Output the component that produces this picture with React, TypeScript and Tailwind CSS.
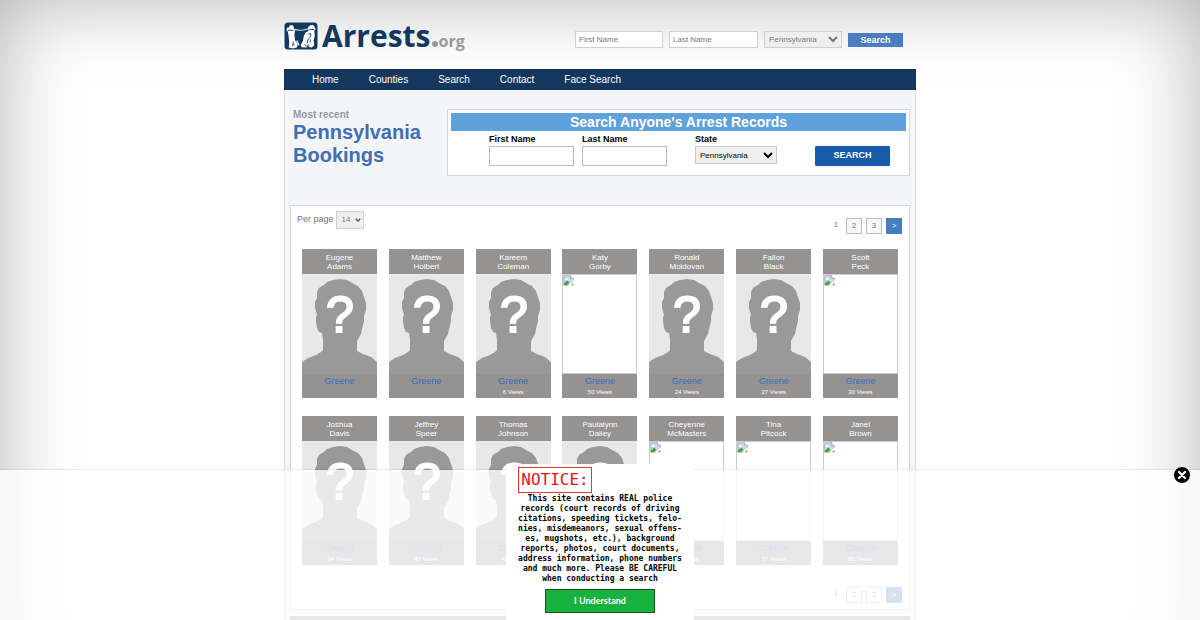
import React from 'react';

type Booking = {
  first: string;
  last: string;
  views?: number;
  photo: 'unknown' | 'missing';
};

const firstRow: Booking[] = [
  { first: 'Eugene', last: 'Adams', photo: 'unknown' },
  { first: 'Matthew', last: 'Holbert', photo: 'unknown' },
  { first: 'Kareem', last: 'Coleman', views: 6, photo: 'unknown' },
  { first: 'Katy', last: 'Gorby', views: 50, photo: 'missing' },
  { first: 'Ronald', last: 'Moldovan', views: 24, photo: 'unknown' },
  { first: 'Fallon', last: 'Black', views: 27, photo: 'unknown' },
  { first: 'Scott', last: 'Peck', views: 30, photo: 'missing' },
];

const secondRow: Booking[] = [
  { first: 'Joshua', last: 'Davis', views: 34, photo: 'unknown' },
  { first: 'Jeffrey', last: 'Speer', views: 42, photo: 'unknown' },
  { first: 'Thomas', last: 'Johnson', views: 45, photo: 'unknown' },
  { first: 'Paulalynn', last: 'Dailey', photo: 'unknown' },
  { first: 'Cheyenne', last: 'McMasters', views: 60, photo: 'missing' },
  { first: 'Tina', last: 'Pitcock', views: 57, photo: 'missing' },
  { first: 'Janel', last: 'Brown', views: 65, photo: 'missing' },
];

const navLinks = ['Home', 'Counties', 'Search', 'Contact', 'Face Search'];

const noticeLines = [
  'This site contains REAL police',
  'records (court records of driving',
  'citations, speeding tickets, felo-',
  'nies, misdemeanors, sexual offens-',
  'es, mugshots, etc.), background',
  'reports, photos, court documents,',
  'address information, phone numbers',
  'and much more. Please BE CAREFUL',
  'when conducting a search',
];

// Two cuffed hands on a navy badge
const LogoMark = () => (
  <svg viewBox="0 0 34 28" className="w-[34px] h-7" aria-hidden="true">
    <rect x="0.5" y="0.5" width="33" height="27" rx="3.5" fill="#14375f" />
    <path d="M2.4 8.200 3 5.800 5 5.400 5.600 3.400 8 3l1.600 1.600.4 2.600L11 9l-.6 4 .8 5.400 2.600 4.200-1 2.800-3.800 1-4.200-.8.400-5.400-.6-6.200-.8-4.400z" fill="#fff" />
    <path d="m24 5.400 2.200-2.200 3-.2 1.600 2.400 1 1.800-1.600 1.400.6 5.200-1.200 4.400.6 5.200-2.400 2-3-.4-.6-3.600-1.600 4-5-.2-.8-2.200 2.200-4.200.8-4.800 1.800-3.600 2.800-1.400z" fill="#fff" />
    <path d="m10 7.400 5 .8 4.600-.2 5-1.200" fill="none" stroke="#dfe5ee" strokeWidth="1.1" />
    <path d="m12 19 2.200 4.600 1.400-.4-2-5z" fill="#dfe5ee" />
    <path d="m9.600 19.600-1.200 4 2-1M24.200 11.800l2.400-.2.200 3-2.600 2.400-1.200 4.400M20.400 22.800l2.200 1M4 8.400l5.400-.2M25.400 7.600l5-.2M26.600 17.400l-.6 3" fill="none" stroke="#14375f" strokeWidth="0.9" />
  </svg>
);

const UnknownPhoto = () => (
  <svg viewBox="0 0 75 100" preserveAspectRatio="none" className="block w-full h-[100px] bg-[#e8e8e8]" role="img" aria-label="No photo">
    <path
      d="M0 100V88L6 84L14 81L19 78L21 76V65L20 59L17 58L15 54L14 47V43L15 41L13 34V28L15 24V18L17 14L20 12L22 11L25 8L31 6L38 5L45 6L50 9L56 12L60 17L62 23L64 29V36L62 42L62 47L60 55L59 60L55 67V77L61 80L69 83L75 88V100Z"
      fill="#999999"
    />
    <text
      x="38"
      y="58"
      textAnchor="middle"
      fontFamily="Liberation Sans, Arial, sans-serif"
      fontSize="50"
      fill="#fff"
      stroke="#fff"
      strokeWidth="2"
    >
      ?
    </text>
  </svg>
);

const MissingPhoto = () => (
  <div className="h-[100px] bg-white border border-[#cccccc]">
    <svg viewBox="0 0 16 16" className="block w-[11px] h-[11px]" role="img" aria-label="Missing photo">
      <path d="M1 1h10l4 4v5l-5 5H1z" fill="#c6d8f2" stroke="#9a9a9a" />
      <path d="M11 1v4h4" fill="#fff" stroke="#9a9a9a" />
      <path d="M2.5 6c.4-2 3-2 3.500-.8C7.500 5 8 7 6.500 7h-3z" fill="#fff" />
      <path d="M1.500 14.500V12L6 8l3.500 3L6 14.500z" fill="#4fa13a" />
      <path d="m7 15.500 9-8V11l-4.500 4.500z" fill="#fff" />
      <path d="M11.500 15H15v-3.500z" fill="#4fa13a" />
    </svg>
  </div>
);

const BookingCard = ({ booking }: { booking: Booking }) => (
  <article className="w-[75px] bg-[#959292] text-center">
    <h2 className="h-[25px] pt-1 text-[8px] leading-[9px] text-white">
      {booking.first}
      <br />
      {booking.last}
    </h2>
    {booking.photo === 'unknown' ? <UnknownPhoto /> : <MissingPhoto />}
    <div className="h-6 pt-0.5">
      <a href="#greene" className="block text-[9px] leading-[10px] text-[#3a6ebd]">Greene</a>
      {booking.views !== undefined && (
        <p className="pt-0.5 text-[6px] leading-[8px] text-white">{booking.views} Views</p>
      )}
    </div>
  </article>
);

const Pagination = () => (
  <nav aria-label="Pages" className="flex gap-1 text-[8px] leading-[14px] text-center text-[#777777]">
    <span className="w-3 h-4">1</span>
    <a href="#page-2" className="w-4 h-4 border border-[#b9bcc6] bg-[#f7f8fa]">2</a>
    <a href="#page-3" className="w-4 h-4 border border-[#b9bcc6] bg-[#f7f8fa]">3</a>
    <a href="#next" className="w-4 h-4 border border-[#4a7dc0] bg-[#4a7dc0] text-white">&gt;</a>
  </nav>
);

const Header = () => (
  <header className="flex justify-between h-[69px] pr-[13px]">
    <a href="#home" className="flex items-start pt-[22px]">
      <LogoMark />
      <span className="flex items-baseline pl-1 font-['Open_Sans',sans-serif] font-bold text-[30px] leading-7 text-[#14375f]">
        Arrests
        <span className="w-1.5 h-1.5 mx-px rounded-full bg-[#999999]" />
        <span className="text-[16px] text-[#999999]">org</span>
      </span>
    </a>
    <form className="flex items-start gap-1.5 pt-[31px] text-[8px]">
      <input aria-label="First name" placeholder="First Name" className="w-[88px] h-[17px] px-[3px] bg-white border border-[#d0d0d0] placeholder:text-[#777777]" />
      <input aria-label="Last name" placeholder="Last Name" className="w-[89px] h-[17px] px-[3px] bg-white border border-[#d0d0d0] placeholder:text-[#777777]" />
      <select aria-label="State" className="w-[78px] h-[17px] bg-[#efefef] border border-[#d0d0d0] text-[#777777]">
        <option>Pennsylvania</option>
      </select>
      <button type="button" className="w-[55px] h-[14px] mt-0.5 bg-[#4a7dc0] text-white text-[9px] leading-[14px] font-bold">
        Search
      </button>
    </form>
  </header>
);

const SearchPanel = () => (
  <form className="w-[463px] h-[67px] p-[3px] bg-white border border-[#d4d6da]">
    <h2 className="bg-[#5fa1da] text-white text-center text-[14px] leading-[18px] font-bold">
      Search Anyone's Arrest Records
    </h2>
    <div className="flex items-start pl-[38px] pt-0.5 text-[8px] text-black">
      <label className="w-[85px] mr-2 text-[9px] leading-3 font-bold">
        First Name
        <input className="block w-full h-5 mt-px px-1 border border-[#bbbbbb]" />
      </label>
      <label className="w-[85px] mr-7 text-[9px] leading-3 font-bold">
        Last Name
        <input className="block w-full h-5 mt-px px-1 border border-[#bbbbbb]" />
      </label>
      <label className="w-[82px] mr-[38px] text-[9px] leading-3 font-bold">
        State
        <select className="block w-full h-[18px] mt-px bg-[#efefef] border border-[#cccccc] text-[8px] font-normal">
          <option>Pennsylvania</option>
        </select>
      </label>
      <button type="button" className="w-[75px] h-5 mt-[13px] rounded-[1px] bg-[#175bab] text-white text-[9px] font-bold">
        SEARCH
      </button>
    </div>
  </form>
);

// Select with its own small chevron, the native arrow leaves no room for the digits
const PerPageSelect = () => (
  <span className="relative">
    <select className="block appearance-none w-7 h-[18px] pl-[5px] bg-[#efefef] border border-[#d0d0d0] text-[8px]">
      <option>14</option>
    </select>
    <svg viewBox="0 0 6 4" className="absolute right-[3px] top-[7px] w-1.5 h-1 pointer-events-none" aria-hidden="true">
      <path d="m.7.7 2.300 2.300L5.300.7" fill="none" stroke="#555" strokeWidth="1.300" />
    </svg>
  </span>
);

const NoticeBar = () => (
  <aside className="fixed inset-x-0 bottom-0 h-[150px] bg-white/78 shadow-[0_0_2px_rgba(0,0,0,0.2)]">
    <div className="absolute -top-1.5 bottom-0 left-1/2 -translate-x-1/2 w-[188px] pt-[3px] bg-white font-['DejaVu_Sans_Mono',monospace]">
      <h2 className="w-[74px] ml-3 border border-[#e8353b] text-center text-[16px] leading-6 text-[#e3101a]">NOTICE:</h2>
      <p className="pt-px text-center text-[8px] leading-[10px] font-bold text-black">
        {noticeLines.map((line) => (
          <span key={line} className="block whitespace-nowrap">{line}</span>
        ))}
      </p>
      <button type="button" className="block w-[110px] h-6 mx-auto mt-[5px] border border-[#1c4d27] bg-[#17b23d] text-white font-['Lato',sans-serif] text-[9px] font-bold">
        I Understand
      </button>
    </div>
    <button type="button" aria-label="Close" className="absolute -top-1 right-[9px]">
      <svg viewBox="0 0 18 18" className="block w-[18px] h-[18px]">
        <circle cx="9" cy="9" r="8.500" fill="#000" stroke="#fff" />
        <path d="m6 6 6 6M12 6l-6 6" stroke="#fff" strokeWidth="2.400" strokeLinecap="round" />
      </svg>
    </button>
  </aside>
);

const App: React.FC = () => {
  return (
    <div className="min-h-screen bg-white shadow-[inset_0_0_80px_rgba(0,0,0,0.3)] font-['Liberation_Sans',Arial,sans-serif]">
      <div className="max-w-[632px] mx-auto">
        <Header />

        <nav className="flex items-center gap-[30px] h-[21px] pl-7 bg-[#14375f] text-[10px] text-white">
          {navLinks.map((label) => (
            <a key={label} href={'#' + label.toLowerCase().replace(' ', '-')}>{label}</a>
          ))}
        </nav>

        <main className="px-[5px] pb-14 bg-[#f4f5f7] border-x border-[#d9dbe0]">
          <div className="flex justify-between items-start h-[115px] pt-[19px]">
            <h1 className="pl-[3px] text-[20px] leading-[23px] font-bold text-[#3f6fb5]">
              <span className="block text-[10px] leading-3 text-[#999999]">Most recent</span>
              Pennsylvania
              <br />
              Bookings
            </h1>
            <SearchPanel />
          </div>

          <section className="bg-white border border-[#d4d6dc] pb-1.5">
            <div className="flex justify-between items-start h-[43px] pl-1.5 pr-[7px] pt-[5px]">
              <label className="flex items-center gap-0.5 text-[9px] text-[#777777]">
                Per page
                <PerPageSelect />
              </label>
              <div className="pt-[7px]">
                <Pagination />
              </div>
            </div>
            <div className="flex flex-col gap-[18px] px-[11px]">
              <div className="flex justify-between">
                {firstRow.map((booking) => <BookingCard key={booking.last} booking={booking} />)}
              </div>
              <div className="flex justify-between">
                {secondRow.map((booking) => <BookingCard key={booking.last} booking={booking} />)}
              </div>
            </div>
            <div className="flex justify-end pt-[22px] pr-[7px]">
              <Pagination />
            </div>
          </section>

          <div className="h-6 mt-1.5 bg-[#959292]" />
        </main>
      </div>

      <NoticeBar />
    </div>
  );
};

export default App;
